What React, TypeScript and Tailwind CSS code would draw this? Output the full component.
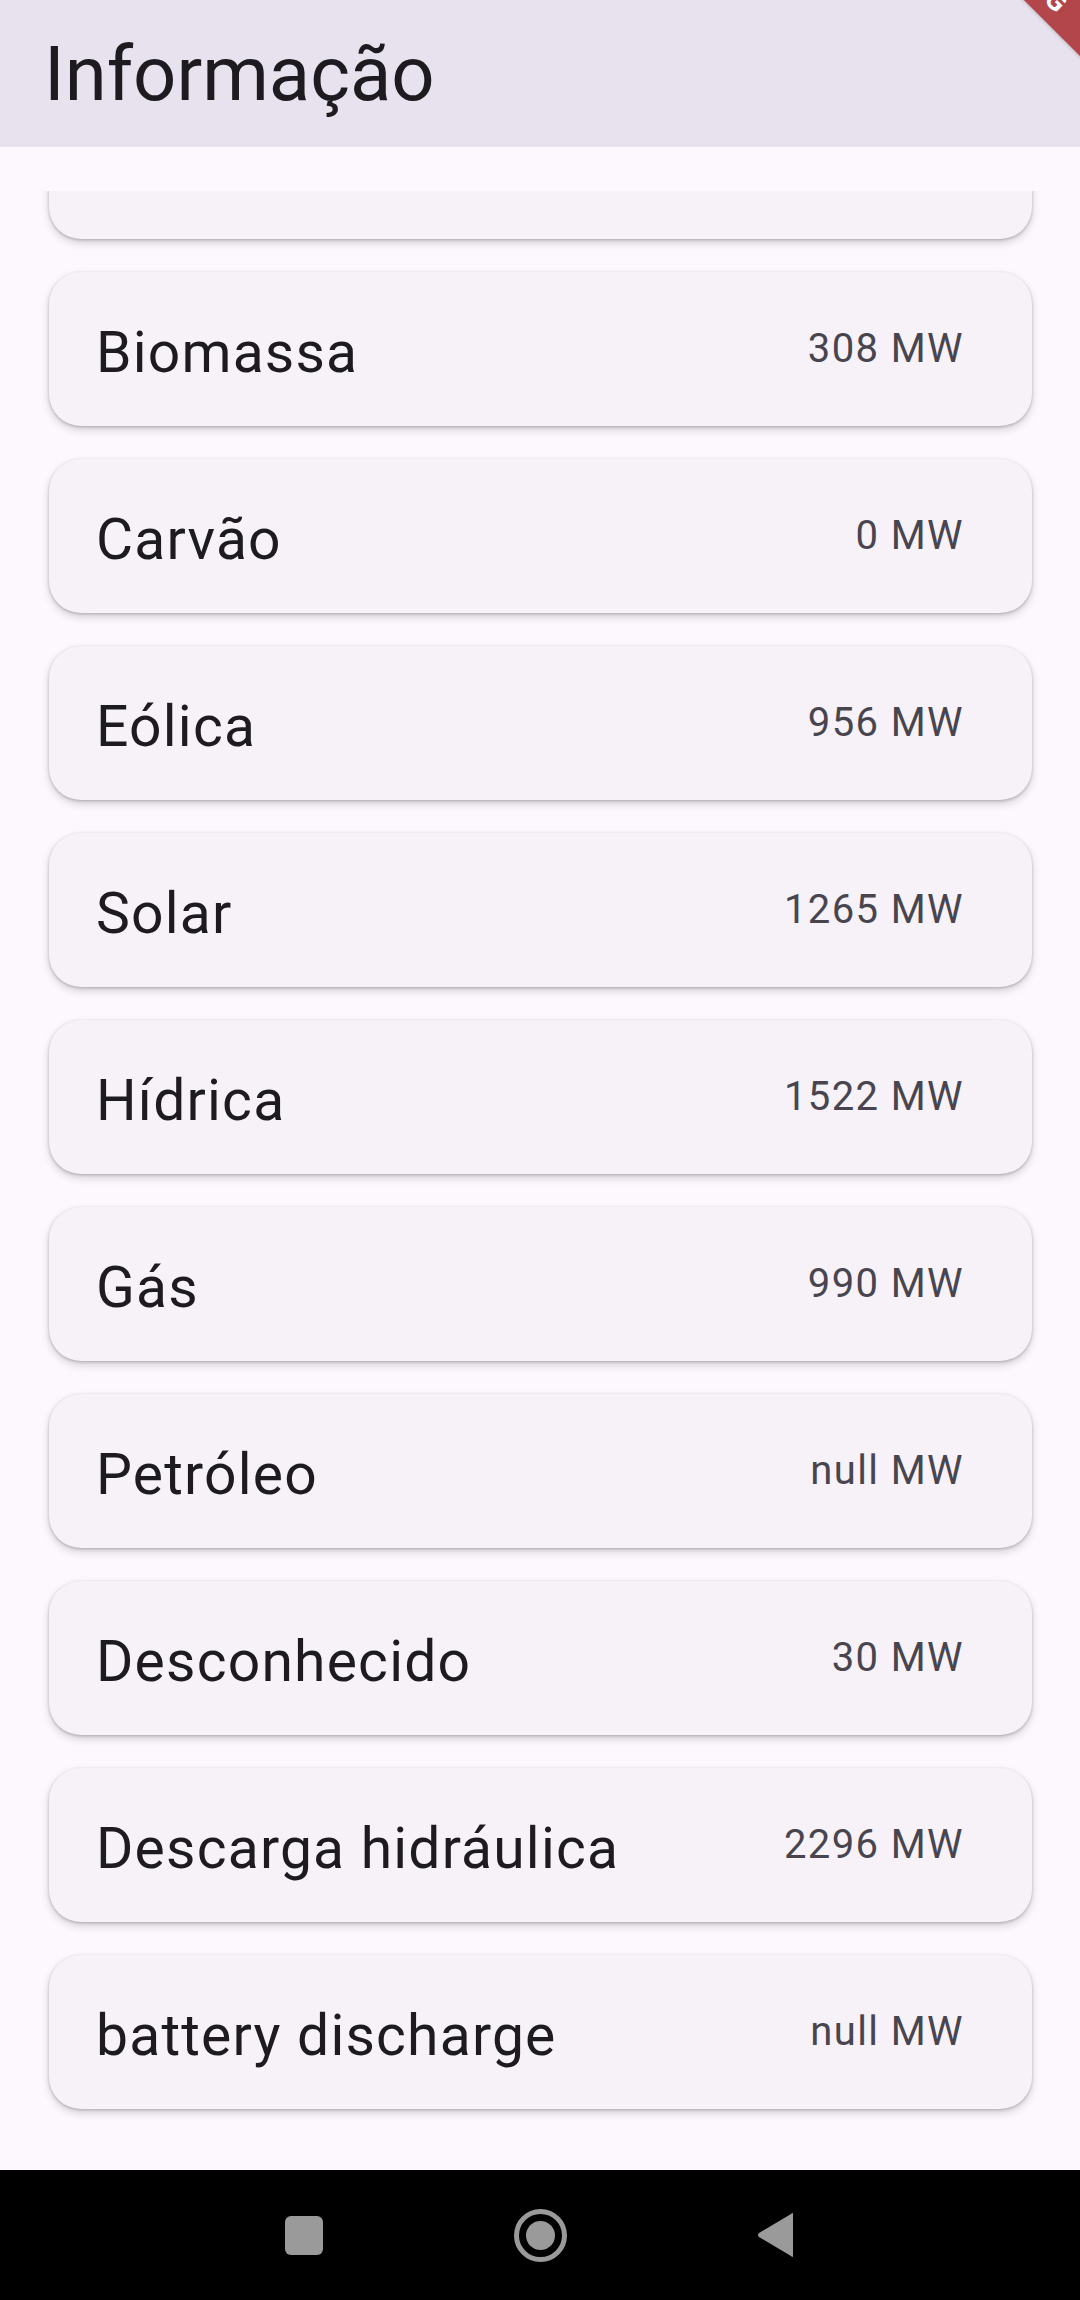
import React from 'react'

const sources = [
  { name: 'Biomassa', value: '308 MW' },
  { name: 'Carvão', value: '0 MW' },
  { name: 'Eólica', value: '956 MW' },
  { name: 'Solar', value: '1265 MW' },
  { name: 'Hídrica', value: '1522 MW' },
  { name: 'Gás', value: '990 MW' },
  { name: 'Petróleo', value: 'null MW' },
  { name: 'Desconhecido', value: '30 MW' },
  { name: 'Descarga hidráulica', value: '2296 MW' },
  { name: 'battery discharge', value: 'null MW' },
]

const cardClass =
  'h-[154px] shrink-0 flex items-center justify-between pl-[47px] pr-[68px] rounded-[32px] bg-[#f6f2f8] shadow-[0_4px_8px_rgba(0,0,0,0.16),0_1px_3px_rgba(0,0,0,0.22)]'

export default function App() {
  return (
    <div className="relative w-[1080px] h-[2300px] overflow-hidden flex flex-col bg-[#fdf7fe] font-['Roboto',sans-serif]">

      {/* App bar */}
      <header className="h-[147px] shrink-0 flex items-center pl-[44px] bg-[#e7e2ee]">
        <h1 className="text-[76px] leading-none text-[#1d1b20]">Informação</h1>
      </header>

      {/* List, scrolled so the first card is mostly hidden */}
      <main className="flex-1 min-h-0 flex flex-col pt-[44px]">
        <div className="flex-1 min-h-0 overflow-hidden">
          <div className="-mt-[106px] flex flex-col gap-[33px] pl-[49px] pr-[48px]">
            <div className={cardClass} />
            {sources.map((s) => (
              <div key={s.name} className={cardClass}>
                <span className="pt-[6px] text-[57px] leading-none tracking-[1.2px] text-[#1d1b20]">{s.name}</span>
                <span className="text-[40px] leading-none tracking-[1.4px] text-[#49454f]">{s.value}</span>
              </div>
            ))}
          </div>
        </div>
      </main>

      {/* Android nav bar */}
      <nav className="h-[130px] shrink-0 bg-black flex items-center justify-center">
        <div className="w-[236px] flex justify-center">
          <span className="block w-[38px] h-[39px] rounded-[6px] bg-[#9a9a9a]" />
        </div>
        <div className="w-[236px] flex justify-center">
          <span className="flex items-center justify-center w-[53px] h-[53px] rounded-full border-[5px] border-[#9a9a9a]">
            <span className="block w-[29px] h-[29px] rounded-full bg-[#9a9a9a]" />
          </span>
        </div>
        <div className="w-[236px] flex justify-center">
          <svg width="38" height="46" viewBox="0 0 38 46">
            <path d="M36 2 L36 44 Q36 46 34 44 L2 25 Q0 23 2 21 L34 2 Q36 0 36 2 Z" fill="#9a9a9a" />
          </svg>
        </div>
      </nav>

      {/* Debug banner */}
      <div className="absolute left-0 top-0 w-0 h-0 rotate-45 origin-top-left pointer-events-none">
        <div className="absolute left-[462px] top-[-768px] w-[500px] h-[44px] flex items-center justify-center bg-[#b3464a] shadow-[0_0_4px_rgba(0,0,0,0.3)]">
          <span className="text-[28px] font-bold leading-none text-white">DEBUG</span>
        </div>
      </div>
    </div>
  )
}
